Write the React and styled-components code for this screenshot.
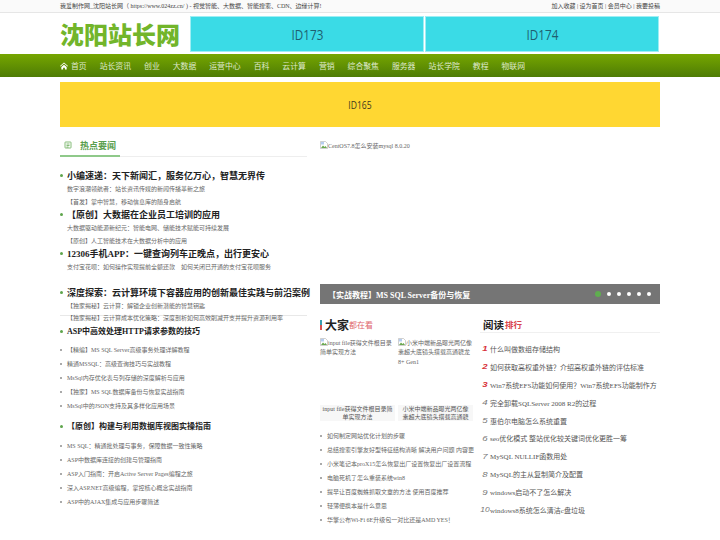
import styled, { createGlobalStyle } from "styled-components";

const GlobalStyle = createGlobalStyle`
  html, body { margin: 0; padding: 0; background: #fff; overflow: hidden; }
  body { font-family: "Liberation Serif", "Noto Sans CJK SC", serif; color: #333; }
  * { box-sizing: border-box; }
  ul { list-style: none; margin: 0; padding: 0; }
  p, h1, h2, h3 { margin: 0; }
`;

const Page = styled.div`
  width: 720px;
  height: 540px;
  overflow: hidden;
`;

const Wrap = styled.div`
  width: 600px;
  margin: 0 auto;
`;

const TopBar = styled.div`
  height: 13px;
  background: #fafafa;
  border-bottom: 1px solid #e6e6e6;
`;

const TopInner = styled(Wrap)`
  display: flex;
  justify-content: space-between;
  font-size: 6px;
  line-height: 12px;
  color: #444;
  white-space: pre;
`;

const Header = styled(Wrap)`
  display: flex;
  height: 41px;
  padding-top: 3px;
`;

const Logo = styled.h1`
  width: 130px;
  font-size: 24px;
  line-height: 36px;
  font-weight: 900;
  color: #72b52a;
  font-family: "Noto Sans CJK SC", sans-serif;
  white-space: nowrap;
`;

const HeaderAds = styled.div`
  display: flex;
  gap: 1px;
  width: 469px;
`;

const AdBox = styled.div`
  flex: 1;
  height: ${p => p.$height}px;
  background: ${p => p.$bg};
  border: 1px solid ${p => p.$edge};
  color: ${p => p.$fg};
  display: flex;
  align-items: center;
  justify-content: center;
  font-family: "Open Sans", sans-serif;
`;

const AdLabel = styled.span`
  display: inline-block;
  font-size: ${p => p.$size}px;
  transform: scaleX(0.78);
`;

const Nav = styled.nav`
  height: 23px;
  background: linear-gradient(#76a600, #4e7c05);
`;

const NavInner = styled(Wrap)`
  display: flex;
  align-items: center;
  height: 23px;
  gap: 13px;
  color: #dfe9cc;
  font-size: 7.85px;
  white-space: nowrap;
`;

const NavHome = styled.span`
  display: flex;
  align-items: center;
  gap: 3px;
`;

const Banner = styled(Wrap)`
  margin-top: 5px;
  display: flex;
`;

const Columns = styled(Wrap)`
  display: grid;
  grid-template-columns: 247px 340px;
  column-gap: 13px;
  margin-top: 7px;
`;

const SectionHead = styled.div`
  height: 23px;
  border-bottom: 1px solid #eee;
  position: relative;
  display: flex;
  align-items: center;
  gap: 8px;
  padding-left: 4px;
  font-size: 9px;
  font-weight: 700;
  color: #5a9e4e;
  &::after {
    content: "";
    position: absolute;
    left: 0;
    bottom: -1px;
    width: 60px;
    height: 2px;
    background: #8fc98a;
  }
`;

const HotBlock = styled.div`
  height: 159px;
  padding-top: 12px;
  border-bottom: 1px solid #e8e8e8;
`;

const Bullet = styled.h3`
  position: relative;
  padding-left: 7px;
  font-size: ${p => p.$small ? "8px" : "9px"};
  font-weight: 700;
  color: #222;
  line-height: 14px;
  white-space: nowrap;
  margin-top: ${p => p.$gap || 0}px;
  &::before {
    content: "";
    position: absolute;
    left: 0;
    top: 5px;
    width: 3px;
    height: 3px;
    border-radius: 50%;
    background: #5ea54c;
  }
`;

const SubLine = styled.p`
  padding-left: 7px;
  font-size: 6px;
  color: #666;
  line-height: 12.5px;
  white-space: nowrap;
`;

const SmallList = styled.ul`
  margin-top: ${p => p.$top}px;
`;

const SmallItem = styled.li`
  position: relative;
  padding-left: 7px;
  height: 14px;
  line-height: 14px;
  font-size: 6px;
  color: #666;
  white-space: nowrap;
  &::before {
    content: "";
    position: absolute;
    left: 0;
    top: 6px;
    width: 2px;
    height: 2px;
    background: #aaa;
  }
`;

const BrokenImg = styled.div`
  font-size: 6px;
  line-height: 10px;
  color: #666;
`;

const RightTop = styled.div`
  height: 150px;
  padding-top: 7px;
`;

const Slide = styled.div`
  height: 20px;
  background: #757575;
  color: #fff;
  display: flex;
  align-items: center;
  justify-content: space-between;
  padding: 0 9px 0 8px;
  font-size: 8px;
  font-weight: 700;
`;

const Dots = styled.div`
  display: flex;
  align-items: center;
  gap: 6px;
`;

const Dot = styled.i`
  width: ${p => p.$on ? 6 : 4}px;
  height: ${p => p.$on ? 6 : 4}px;
  border-radius: 50%;
  background: ${p => p.$on ? "#5fae4f" : "#fff"};
`;

const Lower = styled.div`
  display: grid;
  grid-template-columns: 155px 180px;
  column-gap: 5px;
  margin-top: 12px;
`;

const SeeTitle = styled.div`
  height: 17px;
  display: flex;
  align-items: center;
  position: relative;
  padding-left: 5px;
  font-size: 12px;
  font-weight: 700;
  color: #222;
  span { font-size: 8px; font-weight: 400; color: #e0666c; }
  &::before {
    content: "";
    position: absolute;
    left: 0;
    top: 4px;
    width: 1.5px;
    height: 10px;
    background: linear-gradient(#3a9fb0 50%, #d9534f 50%);
  }
`;

const RankTitle = styled.div`
  height: 17px;
  display: flex;
  align-items: center;
  padding-left: 3px;
  border-bottom: 1px solid #f0f0f0;
  font-size: 10.5px;
  font-weight: 700;
  color: #222;
  span { font-size: 8.5px; color: #d9444c; margin-left: 1px; }
`;

const Thumbs = styled.div`
  display: grid;
  grid-template-columns: 75px 75px;
  column-gap: 3px;
  margin-top: 5px;
`;

const ThumbAlt = styled.div`
  height: 62px;
  font-size: 6px;
  line-height: 9.3px;
  color: #666;
`;

const Caption = styled.div`
  height: 16px;
  background: #f7f7f7;
  margin-top: 5px;
  padding: 0 2px;
  font-size: 6px;
  line-height: 8px;
  text-align: center;
  color: #555;
`;

const RankList = styled.ul`
  margin-top: 7px;
`;

const RankItem = styled.li`
  display: flex;
  align-items: center;
  height: 17.9px;
  font-size: 7px;
  color: #555;
  white-space: nowrap;
  overflow: hidden;
`;

const RankNum = styled.i`
  width: 10px;
  flex: none;
  display: inline-block;
  text-align: center;
  font-family: "Liberation Sans", sans-serif;
  font-size: ${p => p.$wide ? "7px" : "8px"};
  color: ${p => p.$top ? "#d8333a" : "#777"};
  font-weight: ${p => p.$top ? 700 : 400};
  transform: scaleX(1.2);
`;

const navItems = ["站长资讯", "创业", "大数据", "运营中心", "百科", "云计算", "营销", "综合聚焦", "服务器", "站长学院", "教程", "物联网"];

const mysqlList = [
  "【精编】MS SQL Server高级事务处理详解教程",
  "精通MSSQL：高级查询技巧与实战教程",
  "MsSql内存优化表与列存储的深度解析与应用",
  "【独家】MS SQL数据库备份与恢复实战指南",
  "MsSql中的JSON支持及其多样化应用场景",
];

const viewList = [
  "MS SQL：精通批处理与事务，保障数据一致性策略",
  "ASP中数据库连接的创建与管理指南",
  "ASP入门指南：开启Active Server Pages编程之旅",
  "深入ASP.NET高级编程，掌控核心概念实战指南",
  "ASP中的AJAX集成与应用步骤简述",
];

const hotList = [
  "如何制定网站优化计划的步骤",
  "总结搜索引擎友好型特征结构清晰 解决用户问题 内容更",
  "小米笔记本proX15怎么恢复出厂设置恢复出厂设置流程",
  "电脑死机了怎么重装系统win8",
  "提早让百度蜘蛛抓取文章的方法 使用百度推荐",
  "轻薄便携本是什么意思",
  "华擎公布Wi-Fi 6E升级包一对比还是AMD YES！",
];

const rankList = [
  "什么叫做数组存储结构",
  "如何获取高权重外链？介绍高权重外链的评估标准",
  "Win7系统EFS功能如何使用？Win7系统EFS功能制作方",
  "完全卸载SQLServer 2008 R2的过程",
  "惠伯尔电脑怎么系统重置",
  "seo优化模式 整站优化较关键词优化更胜一筹",
  "MySQL NULLIF函数用处",
  "MySQL的主从复制简介及配置",
  "windows启动不了怎么解决",
  "windows8系统怎么清洁c盘垃圾",
];

function BrokenIcon() {
  return (
    <svg width="8" height="8" viewBox="0 0 16 16" style={{ verticalAlign: "-1px" }}>
      <path d="M1 1h10l4 4v10H1z" fill="#fff" stroke="#a0a0a0" />
      <path d="M2 14l4-5 3 3 2-2 3 4z" fill="#6aa84f" />
      <path d="M2 2h6v5H2z" fill="#b5cdf0" />
    </svg>
  );
}

function HotIcon() {
  return (
    <svg width="8" height="8" viewBox="0 0 16 16" fill="none" stroke="#5ea54c" strokeWidth="1.5">
      <rect x="2" y="2" width="12" height="12" rx="1" />
      <path d="M5 6h6M5 9h6M5 12h4" />
    </svg>
  );
}

function HomeIcon() {
  return (
    <svg width="8" height="8" viewBox="0 0 18 16" fill="#fff">
      <path d="M9 0L0 8l1.2 1.3L9 2.6l7.8 6.7L18 8z" />
      <path d="M3 10l6-5 6 5v6h-4v-4H7v4H3z" />
    </svg>
  );
}

export default function App() {
  return (
    <Page>
      <GlobalStyle />
      <TopBar>
        <TopInner>
          <span>我爱制作网_沈阳站长网（ https://www.024zz.cn/ ) - 视觉智能、大数据、智能搜索、CDN、边缘计算!</span>
          <span>加入收藏 | 设为首页 | 会员中心 | 我要投稿</span>
        </TopInner>
      </TopBar>
      <Header>
        <Logo>沈阳站长网</Logo>
        <HeaderAds>
          <AdBox $height={36} $bg="#3adbe6" $edge="#9eeef4" $fg="#1f5f70"><AdLabel $size={15}>ID173</AdLabel></AdBox>
          <AdBox $height={36} $bg="#3adbe6" $edge="#9eeef4" $fg="#1f5f70"><AdLabel $size={15}>ID174</AdLabel></AdBox>
        </HeaderAds>
      </Header>
      <Nav>
        <NavInner>
          <NavHome><HomeIcon />首页</NavHome>
          {navItems.map(n => <span key={n}>{n}</span>)}
        </NavInner>
      </Nav>
      <Banner>
        <AdBox $height={45} $bg="#ffd732" $edge="#ffd732" $fg="#3d3a20"><AdLabel $size={11}>ID165</AdLabel></AdBox>
      </Banner>
      <Columns>
        <div>
          <SectionHead><HotIcon />热点要闻</SectionHead>
          <HotBlock>
            <Bullet>小编速递：天下新闻汇，服务亿万心，智慧无界传</Bullet>
            <SubLine>数字浪潮领航者：站长资讯传媒的新闻传播革新之旅</SubLine>
            <SubLine>【首发】掌中智慧，移动信息库的随身启航</SubLine>
            <Bullet>【原创】大数据在企业员工培训的应用</Bullet>
            <SubLine>大数据驱动能源新纪元：智能电网、储能技术赋能可持续发展</SubLine>
            <SubLine>【原创】人工智能技术在大数据分析中的应用</SubLine>
            <Bullet>12306手机APP：一键查询列车正晚点，出行更安心</Bullet>
            <SubLine>支付宝花呗：如何操作实现提前全额还款　如何关闭已开通的支付宝花呗服务</SubLine>
            <Bullet $gap={12}>深度探索：云计算环境下容器应用的创新最佳实践与前沿案例</Bullet>
            <SubLine>【独家揭秘】云计算：解锁企业创新潜能的智慧钥匙</SubLine>
            <SubLine>【独家揭秘】云计算成本优化策略：深度剖析如何高效削减开支并提升资源利用率</SubLine>
          </HotBlock>
          <Bullet $small $gap={9}>ASP中高效处理HTTP请求参数的技巧</Bullet>
          <SmallList $top={4}>
            {mysqlList.map(t => <SmallItem key={t}>{t}</SmallItem>)}
          </SmallList>
          <Bullet $small $gap={7}>【原创】构建与利用数据库视图实操指南</Bullet>
          <SmallList $top={5}>
            {viewList.map(t => <SmallItem key={t}>{t}</SmallItem>)}
          </SmallList>
        </div>
        <div>
          <RightTop>
            <BrokenImg><BrokenIcon />CentOS7.8怎么安装mysql 8.0.20</BrokenImg>
          </RightTop>
          <Slide>
            <span>【实战教程】MS SQL Server备份与恢复</span>
            <Dots>
              <Dot $on /><Dot /><Dot /><Dot /><Dot /><Dot />
            </Dots>
          </Slide>
          <Lower>
            <div>
              <SeeTitle>大家<span>都在看</span></SeeTitle>
              <Thumbs>
                <div>
                  <ThumbAlt><BrokenIcon />input file获得文件根目录简单实现方法</ThumbAlt>
                  <Caption>input file获得文件根目录简单实现方法</Caption>
                </div>
                <div>
                  <ThumbAlt><BrokenIcon />小米中端新品曝光两亿像素超大底镜头搭载高通骁龙8+ Gen1</ThumbAlt>
                  <Caption>小米中端新品曝光两亿像素超大底镜头搭载高通骁</Caption>
                </div>
              </Thumbs>
              <SmallList $top={8}>
                {hotList.map(t => <SmallItem key={t}>{t}</SmallItem>)}
              </SmallList>
            </div>
            <div>
              <RankTitle>阅读<span>排行</span></RankTitle>
              <RankList>
                {rankList.map((t, i) => (
                  <RankItem key={t}>
                    <RankNum $top={i < 3} $wide={i === 9}>{i + 1}</RankNum>
                    <span>{t}</span>
                  </RankItem>
                ))}
              </RankList>
            </div>
          </Lower>
        </div>
      </Columns>
    </Page>
  );
}
